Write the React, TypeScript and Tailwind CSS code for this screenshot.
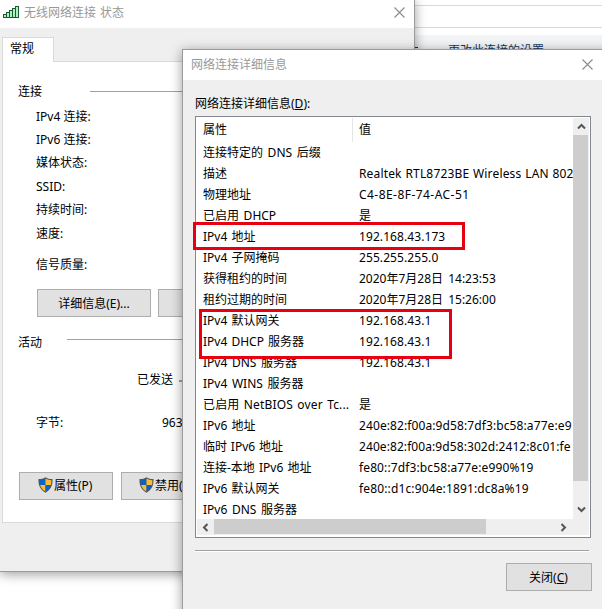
import React from "react";

const rows = [
  ["连接特定的 DNS 后缀", "", "[word-spacing:1.5px]", ""],
  ["描述", "Realtek RTL8723BE Wireless LAN 802", "", "tracking-[0.16px] [word-spacing:0.5px]"],
  ["物理地址", "C4-8E-8F-74-AC-51", "", "tracking-[0.45px]"],
  ["已启用 DHCP", "是", "[word-spacing:1.5px]", ""],
  ["IPv4 地址", "192.168.43.173", "[word-spacing:1px]", "tracking-[0.08px]"],
  ["IPv4 子网掩码", "255.255.255.0", "[word-spacing:1px]", "tracking-[0.08px]"],
  ["获得租约的时间", "2020年7月28日 14:23:53", "", "[word-spacing:2px]"],
  ["租约过期的时间", "2020年7月28日 15:26:00", "", "[word-spacing:2px]"],
  ["IPv4 默认网关", "192.168.43.1", "[word-spacing:1px]", "tracking-[0.08px]"],
  ["IPv4 DHCP 服务器", "192.168.43.1", "[word-spacing:1px]", "tracking-[0.08px]"],
  ["IPv4 DNS 服务器", "192.168.43.1", "[word-spacing:1.5px]", "tracking-[0.08px]"],
  ["IPv4 WINS 服务器", "", "[word-spacing:1.5px]", ""],
  ["已启用 NetBIOS over Tc...", "是", "tracking-[0.17px] [word-spacing:1px]", ""],
  ["IPv6 地址", "240e:82:f00a:9d58:7df3:bc58:a77e:e9", "[word-spacing:1px]", "tracking-[0.1px]"],
  ["临时 IPv6 地址", "240e:82:f00a:9d58:302d:2412:8c01:fe", "[word-spacing:0.7px]", "tracking-[0.08px]"],
  ["连接-本地 IPv6 地址", "fe80::7df3:bc58:a77e:e990%19", "[word-spacing:1px]", "tracking-[0.12px]"],
  ["IPv6 默认网关", "fe80::d1c:904e:1891:dc8a%19", "[word-spacing:1px]", "tracking-[0.14px]"],
  ["IPv6 DNS 服务器", "", "[word-spacing:1.5px]", ""],
];

const labels = ["IPv4 连接:", "IPv6 连接:", "媒体状态:", "SSID:", "持续时间:", "速度:"];

function Close() {
  return (
    <svg width="11" height="11" viewBox="0 0 11 11" className="shrink-0">
      <path d="M0.5 0.5L10.5 10.5M10.5 0.5L0.5 10.5" stroke="#8b8b8b" strokeWidth="1.1" />
    </svg>
  );
}

function Signal() {
  return (
    <svg width="16" height="12" viewBox="0 0 16 12" className="shrink-0" shapeRendering="crispEdges">
      <path d="M0 12V8h3V6h3V4h3V2h3V0h4v12z" fill="#1f5637" />
      <path d="M1 9h2v2H1zM4 7h2v4H4zM7 5h2v6H7zM10 3h2v8h-2zM13 1h2v10h-2z" fill="#a5f5bd" />
    </svg>
  );
}

function Shield() {
  return (
    <svg width="15" height="16" viewBox="0 0 15 16" className="mb-[2px] shrink-0">
      <path d="M7.5 0.2C5.8 1.5 3.5 2 0.5 2.1C0.2 9 2.3 12.8 7.5 15.8C12.7 12.8 14.8 9 14.5 2.1C11.5 2 9.2 1.5 7.5 0.2Z" fill="#555" />
      <path d="M7.5 1.6C5.6 2.8 3.8 3.2 1.7 3.3C1.6 5.4 1.8 6.8 2.1 8H7.5Z" fill="#0864c8" />
      <path d="M7.5 1.6C9.4 2.8 11.2 3.2 13.3 3.3C13.4 5.4 13.2 6.8 12.9 8H7.5Z" fill="#fdbb35" />
      <path d="M2.1 8C3 11 4.5 12.9 7.5 14.6V8Z" fill="#fdbb35" />
      <path d="M12.9 8C12 11 10.5 12.9 7.5 14.6V8Z" fill="#0864c8" />
    </svg>
  );
}

function Arrow({ d }: { d: string }) {
  return (
    <svg width="9" height="9" viewBox="0 0 9 9" className="shrink-0">
      <path d={d} fill="none" stroke="#555" strokeWidth="2" />
    </svg>
  );
}

export default function App() {
  return (
    <div className="relative h-[609px] w-[602px] overflow-hidden bg-white font-['Noto_Sans','Noto_Sans_CJK_SC',sans-serif] text-[12px] leading-[20px] whitespace-nowrap text-black">
      {/* settings page behind */}
      <div className="flex flex-col">
        <div className="h-[6px] border-b border-[#d9d9d9]"></div>
        <div className="h-[22px] border-b border-[#d9d9d9]"></div>
        <div className="mt-[7px] flex h-[40px] bg-[#f2f4f6] pt-[6px] text-[#16365c]">
          <span className="mt-[6px] ml-[414px] h-px w-[4px] bg-[#16365c]"></span>
          <span className="ml-[30px]">更改此连接的设置</span>
        </div>
      </div>

      {/* connection status window */}
      <div className="absolute top-0 left-0 h-[572px] w-[415px] border-r border-b border-[#9b9b9b] bg-[#efefef] shadow-[0_2px_11px_rgba(0,0,0,0.4)]">
        <div className="flex h-[28px] items-center bg-white pr-[9px] pb-[4px] pl-[3px] text-[#999]">
          <Signal />
          <span className="ml-[5px] flex-1 pt-px [word-spacing:1px]">无线网络连接 状态</span>
          <Close />
        </div>
        <div className="flex flex-col pt-[9px] pl-[2px]">
          <div className="z-10 -mb-px h-[25px] w-[52px] border border-b-0 border-[#dadada] bg-white pl-[7px] leading-[22px]">
            常规
          </div>
          <div className="h-[462px] border border-[#dadada] bg-white">
            <div className="mt-[17px] flex h-[24px] items-center pl-[15px]">
              <span className="pt-px">连接</span>
              <span className="ml-[48px] h-px flex-1 bg-[#a0a0a0]"></span>
            </div>
            <div className="mt-[2px] pl-[33px]">
              {labels.map((label) => (
                <div key={label} className="flex h-[23.4px] items-center">
                  {label}
                </div>
              ))}
              <div className="mt-[10px]">信号质量:</div>
            </div>
            <div className="mt-[14px] flex gap-[7px] pl-[34px]">
              <div className="h-[28px] w-[114px] border border-[#adadad] bg-[#e1e1e1] text-center leading-[27px]">
                详细信息(E)...
              </div>
              <div className="h-[28px] w-[150px] border border-[#adadad] bg-[#e1e1e1]"></div>
            </div>
            <div className="mt-[15px] flex pl-[15px]">
              <span className="pt-px">活动</span>
              <span className="mt-[7px] ml-[25px] h-px flex-1 bg-[#a0a0a0]"></span>
            </div>
            <div className="mt-[17px] flex items-center pl-[134px]">
              已发送<span className="mt-[2px] ml-[6px] h-[2px] w-[16px] bg-[#a0a0a0]"></span>
            </div>
            <div className="mt-[23px] flex pl-[33px]">
              <span className="w-[126px]">字节:</span>963
            </div>
            <div className="mt-[39px] flex gap-[8px] pl-[16px]">
              <div className="flex h-[28px] w-[94px] items-center border border-[#adadad] bg-[#e1e1e1] pl-[18px]">
                <Shield />
                <span className="ml-px">属性(P)</span>
              </div>
              <div className="flex h-[28px] w-[94px] items-center border border-[#adadad] bg-[#e1e1e1] pl-[17px]">
                <Shield />
                <span className="ml-px">禁用(D)</span>
              </div>
            </div>
          </div>
        </div>
      </div>

      {/* connection details dialog */}
      <div className="absolute top-[49px] left-[182px] h-[580px] w-[440px] border border-[#9b9b9b] bg-[#efefef] shadow-[0_2px_11px_rgba(0,0,0,0.4)]">
        <div className="flex h-[30px] items-center bg-white pr-[28px] pb-px pl-[8px] text-[#999]">
          <span className="flex-1">网络连接详细信息</span>
          <Close />
        </div>
        <div className="pt-[14px] pl-[12px]">
          网络连接详细信息(<u>D</u>):
        </div>
        <div className="mt-[2px] ml-[12px] h-[422px] w-[396px] border border-[#828790] bg-white p-px">
          <div className="flex h-[401px]">
            <div className="w-[376px] overflow-hidden">
              <div className="flex h-[24px] items-center">
                <span className="h-full w-[156px] border-r border-[#e5e5e5] pl-[6px] leading-[24px]">属性</span>
                <span className="pl-[6px]">值</span>
              </div>
              {rows.map(([name, value, nameClass, valueClass]) => (
                <div key={name} className="flex h-[21px] items-center">
                  <span className={`w-[162px] shrink-0 pl-[6px] ${nameClass}`}>{name}</span>
                  <span className={valueClass}>{value}</span>
                </div>
              ))}
            </div>
            <div className="flex w-[16px] flex-col items-center bg-[#efefef]">
              <div className="flex h-[17px] items-center">
                <Arrow d="M1 6.5L4.5 3L8 6.5" />
              </div>
              <div className="mr-px h-[346px] w-[15px] bg-[#cdcdcd]"></div>
              <div className="flex flex-1 items-center pt-[18px]">
                <Arrow d="M1 2.5L4.5 6L8 2.5" />
              </div>
            </div>
          </div>
          <div className="flex h-[16px] items-center bg-[#efefef]">
            <div className="flex w-[17px] justify-center">
              <Arrow d="M6.5 1L3 4.5L6.5 8" />
            </div>
            <div className="mb-px h-[15px] w-[272px] bg-[#cdcdcd]"></div>
            <div className="ml-[73px]">
              <Arrow d="M2.5 1L6 4.5L2.5 8" />
            </div>
          </div>
        </div>
        <div className="mt-[12px] ml-[12px] h-[2px] w-[394px] border-t border-b border-t-[#a0a0a0] border-b-white"></div>
        <div className="mt-[11px] ml-[323px] h-[28px] w-[86px] border border-[#adadad] bg-[#e1e1e1] pr-px text-center leading-[27px]">
          关闭(<u>C</u>)
        </div>
      </div>

      {/* highlighted addresses */}
      <div className="absolute top-[222px] left-[193px] h-[28px] w-[272px] border-3 border-[#e60012]"></div>
      <div className="absolute top-[309px] left-[199px] h-[50px] w-[253px] border-3 border-[#e60012]"></div>
    </div>
  );
}
